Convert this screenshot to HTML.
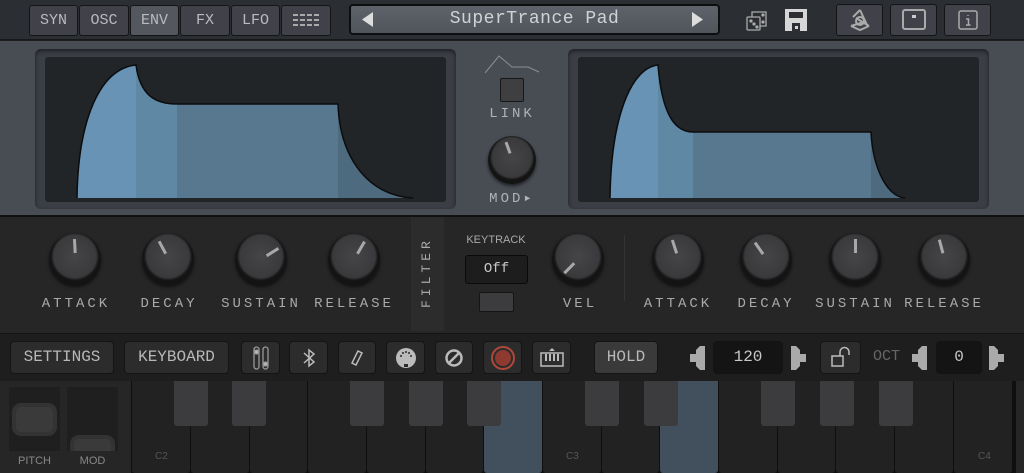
<!DOCTYPE html>
<html><head><meta charset="utf-8"><style>
*{margin:0;padding:0;box-sizing:border-box}
body{width:1024px;height:473px;overflow:hidden;background:#1e1e1e;font-family:"Liberation Mono",monospace;position:relative}
.a{position:absolute}
.tb{position:absolute;top:5px;height:31px;background:#414249;border:1px solid #151517;border-radius:3px;color:#b9bbc0;font-size:15px;text-align:center;line-height:29px}
.tb.on{background:#55575e}
.knob{position:absolute;width:52px;height:52px;border-radius:50%;background:radial-gradient(circle at 50% 45%,#454547 0,#3a3a3c 55%,#151515 62%,#0c0c0c 100%);box-shadow:0 2px 3px rgba(0,0,0,.6)}
.knob i{position:absolute;left:24.5px;top:6px;width:3px;height:14px;background:#a8a8a8;transform-origin:1.5px 20px}
.lab{position:absolute;color:#a9a9a9;font-size:14px;letter-spacing:3px;text-align:center}
.bb{position:absolute;top:341px;height:33px;background:#2c2c2c;border:1px solid #141414;border-radius:4px;color:#b8b8b8;font-size:16px;text-align:center;line-height:31px}
.wk{position:absolute;top:381px;height:92px;width:57.5px;background:#222;border-radius:0 0 3px 3px}
.bk{position:absolute;top:381px;height:45px;width:34px;background:#3c3c3e;border-radius:0 0 3px 3px}
.kl{position:absolute;top:451px;color:#555;font-size:10px;font-family:"Liberation Sans",sans-serif}
</style></head><body>
<div class="a" style="left:0;top:0;width:1024px;height:40px;background:#2b2e33;border-bottom:1px solid #17181a"></div>
<div class="tb" style="left:29px;width:49px">SYN</div>
<div class="tb" style="left:79px;width:50px">OSC</div>
<div class="tb on" style="left:130px;width:49px">ENV</div>
<div class="tb" style="left:180px;width:50px">FX</div>
<div class="tb" style="left:231px;width:49px">LFO</div>
<div class="tb" style="left:281px;width:50px"><svg width="26" height="14" style="margin-top:8px" fill="#aaa"><rect x="0" y="0" width="5" height="2"/><rect x="7" y="0" width="5" height="2"/><rect x="14" y="0" width="5" height="2"/><rect x="21" y="0" width="5" height="2"/><rect x="0" y="5" width="5" height="2"/><rect x="7" y="5" width="5" height="2"/><rect x="14" y="5" width="5" height="2"/><rect x="21" y="5" width="5" height="2"/><rect x="0" y="10" width="5" height="2"/><rect x="7" y="10" width="5" height="2"/><rect x="14" y="10" width="5" height="2"/><rect x="21" y="10" width="5" height="2"/></svg></div>
<div class="a" style="left:349px;top:4px;width:371px;height:31px;background:linear-gradient(#5e636b,#50545b);border:2px solid #0d0e10;border-radius:4px;color:#d0d2d6;font-size:18px;text-align:center;line-height:27px;letter-spacing:0.5px">SuperTrance Pad</div>
<svg class="a" style="left:362px;top:12px" width="12" height="15"><path d="M11 0 L0 7.5 L11 15Z" fill="#ddd"/></svg>
<svg class="a" style="left:692px;top:12px" width="12" height="15"><path d="M0 0 L11 7.5 L0 15Z" fill="#ddd"/></svg>
<svg class="a" style="left:746px;top:9px" width="24" height="23" fill="none" stroke="#aaa" stroke-width="1.3"><rect x="1" y="8" width="13" height="13" rx="1"/><path d="M6 8 V3 H20 V17 H14"/><circle cx="5" cy="12" r="1" fill="#aaa"/><circle cx="8" cy="15" r="1" fill="#aaa"/><circle cx="11" cy="18" r="1" fill="#aaa"/><circle cx="17" cy="6" r="1" fill="#aaa"/><circle cx="17" cy="13" r="1" fill="#aaa"/></svg>
<svg class="a" style="left:785px;top:9px" width="22" height="22"><path d="M0 0 H22 V22 H0Z M4 3 V9 H18 V3Z M7 14 V22 H15 V14Z" fill="#d6d6d6" fill-rule="evenodd"/><rect x="10" y="17" width="3" height="3" fill="#d6d6d6"/></svg>
<div class="tb" style="left:836px;top:4px;width:47px;height:32px"><svg width="26" height="26" style="margin-top:2px" fill="none" stroke="#aaa" stroke-width="2"><circle cx="13" cy="14" r="4"/><path d="M13 3 L20 18 M4 19 L17 15 M22 19 L9 11 M13 3 L6 10 M4 19 L13 23 L22 19"/></svg></div>
<div class="tb" style="left:890px;top:4px;width:47px;height:32px"><svg width="24" height="22" style="margin-top:4px" fill="none" stroke="#aaa" stroke-width="2"><rect x="1" y="1" width="22" height="19" rx="2"/><rect x="10" y="6" width="4" height="3" fill="#ccc" stroke="none"/></svg></div>
<div class="tb" style="left:944px;top:4px;width:47px;height:32px"><svg width="20" height="20" style="margin-top:5px" fill="none" stroke="#aaa" stroke-width="1.5"><rect x="1" y="1" width="18" height="18" rx="2"/><path d="M10 5 V6 M8 9 H10.5 V15 M8 15 H12.5"/></svg></div>

<div class="a" style="left:0;top:41px;width:1024px;height:174px;background:#484c53"></div>
<div class="a" style="left:35px;top:49px;width:421px;height:160px;background:#3b3e44;border-radius:6px;box-shadow:inset 0 2px 4px rgba(0,0,0,.5)"></div>
<div class="a" style="left:45px;top:57px;width:401px;height:145px;background:#222528;border-radius:3px"></div>
<div class="a" style="left:568px;top:49px;width:421px;height:160px;background:#3b3e44;border-radius:6px;box-shadow:inset 0 2px 4px rgba(0,0,0,.5)"></div>
<div class="a" style="left:578px;top:57px;width:401px;height:145px;background:#222528;border-radius:3px"></div>
<svg class="a" style="left:0;top:0" width="1024" height="215">
<defs>
<clipPath id="c1"><path d="M77 198 C78 120 100 68 136 65 C140 95 155 104 177 104 L338 104 C340 160 370 196 413 198 Z"/></clipPath>
<clipPath id="c2"><path d="M610 198 C611 120 630 68 658 65 C662 115 675 132 693 132 L871 132 C873 170 888 197 905 198 Z"/></clipPath>
</defs>
<g clip-path="url(#c1)"><rect x="77" y="60" width="59" height="140" fill="#6893b5"/><rect x="136" y="60" width="41" height="140" fill="#5f88a4"/><rect x="177" y="60" width="161" height="140" fill="#57788e"/><rect x="338" y="60" width="80" height="140" fill="#4d6a7e"/></g>
<path d="M77 198 C78 120 100 68 136 65 C140 95 155 104 177 104 L338 104 C340 160 370 196 413 198" fill="none" stroke="#0b0c0d" stroke-width="1.5"/>
<g clip-path="url(#c2)"><rect x="610" y="60" width="48" height="140" fill="#6893b5"/><rect x="658" y="60" width="35" height="140" fill="#5f88a4"/><rect x="693" y="60" width="178" height="140" fill="#57788e"/><rect x="871" y="60" width="40" height="140" fill="#4d6a7e"/></g>
<path d="M610 198 C611 120 630 68 658 65 C662 115 675 132 693 132 L871 132 C873 170 888 197 905 198" fill="none" stroke="#0b0c0d" stroke-width="1.5"/>
<path d="M485 73 L499 56 L512 67 L528 67 L539 72" fill="none" stroke="#8a8d92" stroke-width="1"/>
</svg>
<div class="a" style="left:500px;top:78px;width:24px;height:24px;background:#3f3f41;border:1px solid #161616;border-radius:2px"></div>
<div class="lab" style="left:480px;top:106px;width:64px;color:#b0b2b6">LINK</div>
<div class="knob" style="left:488px;top:136px;width:48px;height:48px"><i style="left:23px;top:5px;height:12px;transform:rotate(-20deg);transform-origin:1.5px 19px"></i></div>
<div class="lab" style="left:480px;top:190px;width:64px;color:#b0b2b6">MOD▸</div>

<div class="a" style="left:0;top:215px;width:1024px;height:118px;background:#262626;border-top:2px solid #111"></div>
<div class="a" style="left:411px;top:217px;width:33px;height:114px;background:#2c2c2c"></div>
<div class="lab" style="left:412px;top:248px;width:30px;height:60px;writing-mode:vertical-rl;transform:rotate(180deg);line-height:30px;letter-spacing:4px;font-size:13px">FILTER</div>
<div class="a" style="left:624px;top:235px;width:1px;height:66px;background:#333"></div>
<div class="knob" style="left:49px;top:233px"><i style="transform:rotate(-3deg)"></i></div>
<div class="knob" style="left:142px;top:233px"><i style="transform:rotate(-28deg)"></i></div>
<div class="knob" style="left:235px;top:233px"><i style="transform:rotate(58deg)"></i></div>
<div class="knob" style="left:328px;top:233px"><i style="transform:rotate(30deg)"></i></div>
<div class="knob" style="left:552px;top:233px"><i style="transform:rotate(-135deg)"></i></div>
<div class="knob" style="left:652px;top:233px"><i style="transform:rotate(-18deg)"></i></div>
<div class="knob" style="left:740px;top:233px"><i style="transform:rotate(-35deg)"></i></div>
<div class="knob" style="left:829px;top:233px"><i style="transform:rotate(0deg)"></i></div>
<div class="knob" style="left:918px;top:233px"><i style="transform:rotate(-15deg)"></i></div>
<div class="lab" style="left:30px;top:296px;width:92px">ATTACK</div>
<div class="lab" style="left:123px;top:296px;width:92px">DECAY</div>
<div class="lab" style="left:215px;top:296px;width:92px">SUSTAIN</div>
<div class="lab" style="left:308px;top:296px;width:92px">RELEASE</div>
<div class="lab" style="left:535px;top:296px;width:90px">VEL</div>
<div class="lab" style="left:632px;top:296px;width:92px">ATTACK</div>
<div class="lab" style="left:720px;top:296px;width:92px">DECAY</div>
<div class="lab" style="left:809px;top:296px;width:92px">SUSTAIN</div>
<div class="lab" style="left:898px;top:296px;width:92px">RELEASE</div>
<div class="a" style="left:455px;top:234px;width:82px;text-align:center;color:#a9a9a9;font-size:11px;font-family:'Liberation Sans',sans-serif">KEYTRACK</div>
<div class="a" style="left:465px;top:255px;width:63px;height:29px;background:#1d1d1d;border:1.5px solid #0a0a0a;border-radius:3px;color:#c9c9c9;font-size:14px;text-align:center;line-height:26px">Off</div>
<div class="a" style="left:479px;top:292px;width:35px;height:20px;background:#3c3c3e;border:1px solid #151515;border-radius:2px"></div>

<div class="a" style="left:0;top:333px;width:1024px;height:48px;background:#1e1e1e;border-top:1px solid #151515"></div>
<div class="bb" style="left:10px;width:104px">SETTINGS</div>
<div class="bb" style="left:124px;width:105px">KEYBOARD</div>
<div class="bb" style="left:241px;width:39px"><svg width="16" height="24" style="margin-top:4px" fill="none" stroke="#999" stroke-width="1.3"><rect x="1" y="1" width="5" height="22" rx="2.5"/><rect x="10" y="1" width="5" height="22" rx="2.5"/><circle cx="3.5" cy="6" r="2" fill="#bbb"/><circle cx="12.5" cy="18" r="2" fill="#bbb"/></svg></div>
<div class="bb" style="left:289px;width:39px"><svg width="14" height="20" style="margin-top:6px" fill="none" stroke="#bbb" stroke-width="1.5"><path d="M2 5 L12 14 L7 18 V2 L12 6 L2 15"/></svg></div>
<div class="bb" style="left:338px;width:38px"><svg width="14" height="18" style="margin-top:7px" fill="none" stroke="#bbb" stroke-width="1.5"><path d="M8 2 L12 4 L6 16 L2 14Z"/></svg></div>
<div class="bb" style="left:386px;width:39px"><svg width="22" height="22" style="margin-top:5px"><circle cx="11" cy="11" r="10" fill="#bbb"/><g fill="#2c2c2c"><circle cx="6" cy="9" r="1"/><circle cx="8" cy="6" r="1"/><circle cx="11" cy="5" r="1"/><circle cx="14" cy="6" r="1"/><circle cx="16" cy="9" r="1"/><rect x="9" y="17" width="4" height="3"/></g></svg></div>
<div class="bb" style="left:435px;width:38px"><svg width="20" height="20" style="margin-top:6px" fill="none" stroke="#bbb" stroke-width="2.5"><circle cx="10" cy="10" r="7.5"/><path d="M5 15 L15 5"/></svg></div>
<div class="bb" style="left:483px;width:39px"><svg width="24" height="24" style="margin-top:4px"><circle cx="12" cy="12" r="11" fill="none" stroke="#b0483a" stroke-width="2"/><circle cx="12" cy="12" r="8" fill="#8e3a30"/></svg></div>
<div class="bb" style="left:532px;width:39px"><svg width="24" height="20" style="margin-top:6px"><path d="M9 3 L12 0 L15 3Z" fill="#bbb"/><rect x="1" y="5" width="22" height="13" fill="none" stroke="#bbb" stroke-width="1.5"/><g fill="#bbb"><rect x="5" y="6" width="2" height="7"/><rect x="9" y="6" width="2" height="7"/><rect x="13" y="6" width="2" height="7"/><rect x="17" y="6" width="2" height="7"/></g></svg></div>
<div class="bb" style="left:594px;width:64px;background:#3a3a3a">HOLD</div>
<svg class="a" style="left:690px;top:346px" width="16" height="24"><path d="M0 8 L6 8 L6 4 L10 0 L15 0 L15 24 L10 24 L6 20 L6 16 L0 16Z" fill="#aaa"/></svg>
<div class="bb" style="left:713px;width:70px;background:#141414;color:#c8c8c8">120</div>
<svg class="a" style="left:791px;top:346px" width="16" height="24"><path d="M0 0 L5 0 L9 4 L9 8 L15 8 L15 16 L9 16 L9 20 L5 24 L0 24Z" fill="#aaa"/></svg>
<div class="bb" style="left:820px;width:41px"><svg width="22" height="22" style="margin-top:4px" fill="none" stroke="#bbb" stroke-width="1.5"><rect x="2" y="10" width="11" height="10"/><path d="M10 10 V6 A4.5 4.5 0 0 1 19 6 V9"/></svg></div>
<div class="a" style="left:873px;top:348px;color:#666;font-size:15px">OCT</div>
<svg class="a" style="left:912px;top:346px" width="16" height="24"><path d="M0 8 L6 8 L6 4 L10 0 L15 0 L15 24 L10 24 L6 20 L6 16 L0 16Z" fill="#aaa"/></svg>
<div class="bb" style="left:936px;width:46px;background:#141414;color:#c8c8c8">0</div>
<svg class="a" style="left:989px;top:346px" width="16" height="24"><path d="M0 0 L5 0 L9 4 L9 8 L15 8 L15 16 L9 16 L9 20 L5 24 L0 24Z" fill="#aaa"/></svg>

<div class="a" style="left:0;top:381px;width:132px;height:92px;background:#262626"></div>
<div class="a" style="left:9px;top:387px;width:51px;height:64px;background:#1f1f1f"></div>
<div class="a" style="left:12px;top:403px;width:45px;height:33px;border:4px solid #333;border-radius:9px;background:#3a3a3a"></div>
<div class="a" style="left:67px;top:387px;width:51px;height:64px;background:#1f1f1f"></div>
<div class="a" style="left:70px;top:435px;width:45px;height:16px;border:4px solid #333;border-bottom:none;border-radius:9px 9px 0 0;background:#3a3a3a"></div>
<div class="a" style="left:9px;top:455px;width:51px;text-align:center;color:#888;font-size:11px;font-family:'Liberation Sans',sans-serif">PITCH</div>
<div class="a" style="left:67px;top:455px;width:51px;text-align:center;color:#888;font-size:11px;font-family:'Liberation Sans',sans-serif">MOD</div>

<div class="a" style="left:131px;top:381px;width:885px;height:92px;background:#0f0f0f"></div>
<div class="wk" style="left:132px"></div><div class="wk" style="left:191px"></div><div class="wk" style="left:249.5px"></div><div class="wk" style="left:308px"></div><div class="wk" style="left:367px"></div><div class="wk" style="left:425.5px"></div><div class="wk" style="left:484px;background:#42505d"></div><div class="wk" style="left:543px"></div><div class="wk" style="left:601.5px"></div><div class="wk" style="left:660px;background:#42505d"></div><div class="wk" style="left:719px"></div><div class="wk" style="left:777.5px"></div><div class="wk" style="left:836px"></div><div class="wk" style="left:895px"></div><div class="wk" style="left:954px"></div>
<div class="bk" style="left:174px"></div><div class="bk" style="left:232px"></div><div class="bk" style="left:350px"></div><div class="bk" style="left:409px"></div><div class="bk" style="left:467px"></div><div class="bk" style="left:585px"></div><div class="bk" style="left:644px"></div><div class="bk" style="left:761px"></div><div class="bk" style="left:820px"></div><div class="bk" style="left:879px"></div>
<div class="kl" style="left:155px">C2</div><div class="kl" style="left:566px">C3</div><div class="kl" style="left:978px">C4</div>
<div class="a" style="left:1016px;top:381px;width:8px;height:92px;background:#262626"></div>
</body></html>
